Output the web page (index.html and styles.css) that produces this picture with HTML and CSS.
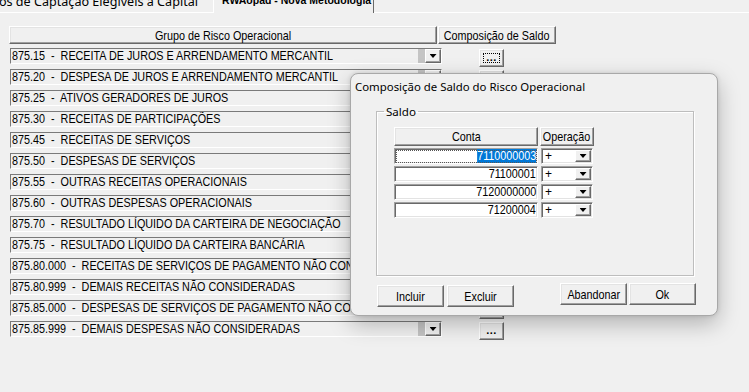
FILE: index.html
```html
<!DOCTYPE html>
<html lang="pt-BR">
<head>
  <meta charset="UTF-8">
  <meta name="viewport" content="width=device-width, initial-scale=1.0">
  <title>Grupo de Risco Operacional</title>
  <link rel="stylesheet" href="styles.css">
</head>
<body>

  <div class="tabs">
    <div class="tab tab-first"><span>Instrumentos de Captação Elegíveis à Capital</span></div>
    <div class="tab tab-active"><span>RWAopad - Nova Metodologia</span></div>
    <div class="tab-rest"></div>
  </div>

  <div class="page">
    <div class="grid-head">
      <div class="btn head-grupo"><span class="n">Grupo de Risco Operacional</span></div>
      <div class="btn head-saldo"><span class="n">Composição de Saldo</span></div>
    </div>

    <div class="rows">
      <div class="row">
        <div class="combo"><span class="combo-text"><span class="n">875.15  -  RECEITA DE JUROS E ARRENDAMENTO MERCANTIL</span></span><span class="combo-strip"></span><span class="combo-btn"><i class="arrow"></i></span></div>
        <div class="btn dots focused"><span>...</span></div>
      </div>
      <div class="row">
        <div class="combo"><span class="combo-text"><span class="n">875.20  -  DESPESA DE JUROS E ARRENDAMENTO MERCANTIL</span></span><span class="combo-strip"></span><span class="combo-btn"><i class="arrow"></i></span></div>
        <div class="btn dots"><span>...</span></div>
      </div>
      <div class="row">
        <div class="combo"><span class="combo-text"><span class="n">875.25  -  ATIVOS GERADORES DE JUROS</span></span><span class="combo-strip"></span><span class="combo-btn"><i class="arrow"></i></span></div>
        <div class="btn dots"><span>...</span></div>
      </div>
      <div class="row">
        <div class="combo"><span class="combo-text"><span class="n">875.30  -  RECEITAS DE PARTICIPAÇÕES</span></span><span class="combo-strip"></span><span class="combo-btn"><i class="arrow"></i></span></div>
        <div class="btn dots"><span>...</span></div>
      </div>
      <div class="row">
        <div class="combo"><span class="combo-text"><span class="n">875.45  -  RECEITAS DE SERVIÇOS</span></span><span class="combo-strip"></span><span class="combo-btn"><i class="arrow"></i></span></div>
        <div class="btn dots"><span>...</span></div>
      </div>
      <div class="row">
        <div class="combo"><span class="combo-text"><span class="n">875.50  -  DESPESAS DE SERVIÇOS</span></span><span class="combo-strip"></span><span class="combo-btn"><i class="arrow"></i></span></div>
        <div class="btn dots"><span>...</span></div>
      </div>
      <div class="row">
        <div class="combo"><span class="combo-text"><span class="n">875.55  -  OUTRAS RECEITAS OPERACIONAIS</span></span><span class="combo-strip"></span><span class="combo-btn"><i class="arrow"></i></span></div>
        <div class="btn dots"><span>...</span></div>
      </div>
      <div class="row">
        <div class="combo"><span class="combo-text"><span class="n">875.60  -  OUTRAS DESPESAS OPERACIONAIS</span></span><span class="combo-strip"></span><span class="combo-btn"><i class="arrow"></i></span></div>
        <div class="btn dots"><span>...</span></div>
      </div>
      <div class="row">
        <div class="combo"><span class="combo-text"><span class="n">875.70  -  RESULTADO LÍQUIDO DA CARTEIRA DE NEGOCIAÇÃO</span></span><span class="combo-strip"></span><span class="combo-btn"><i class="arrow"></i></span></div>
        <div class="btn dots"><span>...</span></div>
      </div>
      <div class="row">
        <div class="combo"><span class="combo-text"><span class="n">875.75  -  RESULTADO LÍQUIDO DA CARTEIRA BANCÁRIA</span></span><span class="combo-strip"></span><span class="combo-btn"><i class="arrow"></i></span></div>
        <div class="btn dots"><span>...</span></div>
      </div>
      <div class="row">
        <div class="combo"><span class="combo-text"><span class="n">875.80.000  -  RECEITAS DE SERVIÇOS DE PAGAMENTO NÃO CONSIDERADAS</span></span><span class="combo-strip"></span><span class="combo-btn"><i class="arrow"></i></span></div>
        <div class="btn dots"><span>...</span></div>
      </div>
      <div class="row">
        <div class="combo"><span class="combo-text"><span class="n">875.80.999  -  DEMAIS RECEITAS NÃO CONSIDERADAS</span></span><span class="combo-strip"></span><span class="combo-btn"><i class="arrow"></i></span></div>
        <div class="btn dots"><span>...</span></div>
      </div>
      <div class="row">
        <div class="combo"><span class="combo-text"><span class="n">875.85.000  -  DESPESAS DE SERVIÇOS DE PAGAMENTO NÃO CONSIDERADAS</span></span><span class="combo-strip"></span><span class="combo-btn"><i class="arrow"></i></span></div>
        <div class="btn dots"><span>...</span></div>
      </div>
      <div class="row">
        <div class="combo"><span class="combo-text"><span class="n">875.85.999  -  DEMAIS DESPESAS NÃO CONSIDERADAS</span></span><span class="combo-strip"></span><span class="combo-btn"><i class="arrow"></i></span></div>
        <div class="btn dots"><span>...</span></div>
      </div>
    </div>
  </div>

  <div class="dialog">
    <div class="dlg-title">Composição de Saldo do Risco Operacional</div>

    <fieldset class="group">
      <legend>Saldo</legend>
      <div class="saldo-head">
        <div class="btn col-conta"><span class="n">Conta</span></div>
        <div class="btn col-op"><span class="n">Operação</span></div>
      </div>
      <div class="saldo-rows">
        <div class="saldo-row">
          <div class="edit focused"><span class="n"><span class="sel">7110000003</span></span></div>
          <div class="op-combo"><span class="op-text">+</span><span class="combo-btn"><i class="arrow"></i></span></div>
        </div>
        <div class="saldo-row">
          <div class="edit"><span class="n">71100001</span></div>
          <div class="op-combo"><span class="op-text">+</span><span class="combo-btn"><i class="arrow"></i></span></div>
        </div>
        <div class="saldo-row">
          <div class="edit"><span class="n">7120000000</span></div>
          <div class="op-combo"><span class="op-text">+</span><span class="combo-btn"><i class="arrow"></i></span></div>
        </div>
        <div class="saldo-row">
          <div class="edit"><span class="n">71200004</span></div>
          <div class="op-combo"><span class="op-text">+</span><span class="combo-btn"><i class="arrow"></i></span></div>
        </div>
      </div>
    </fieldset>

    <div class="dlg-buttons">
      <div class="btn-pair pair-left">
        <button class="btn dlg-btn"><span class="n">Incluir</span></button>
        <button class="btn dlg-btn"><span class="n">Excluir</span></button>
      </div>
      <div class="btn-pair pair-right">
        <button class="btn dlg-btn"><span class="n">Abandonar</span></button>
        <button class="btn dlg-btn"><span class="n">Ok</span></button>
      </div>
    </div>
  </div>

</body>
</html>
```

FILE: styles.css
```css
* {
  box-sizing: border-box;
}

body {
  margin: 0;
  width: 749px;
  height: 392px;
  overflow: hidden;
  position: relative;
  background: #f0f0f0;
  color: #000;
  font-family: "Liberation Sans", Arial, sans-serif;
  font-size: 13px;
}

/* texto estreito (tipo Arial Narrow) */
.n {
  display: inline-block;
  white-space: pre;
  transform: scaleX(0.83);
}

/* abas do topo */
.tabs {
  display: flex;
  height: 13px;
}

.tab {
  height: 13px;
  overflow: hidden;
  display: flex;
  align-items: flex-start;
  white-space: nowrap;
}

.tab-first {
  width: 214px;
  padding-right: 15px;
  justify-content: flex-end;
  border-right: 1px solid #fff;
  border-bottom: 1px solid #fff;
  font-family: "Noto Sans", sans-serif;
  font-size: 12.6px;
  line-height: 14px;
}

.tab-first span {
  margin-top: -5px;
}

.tab-active {
  width: 160px;
  padding-left: 8px;
  border-right: 1px solid #696969;
  font-family: "Liberation Sans", sans-serif;
  font-weight: bold;
  font-size: 10.5px;
  line-height: 12px;
}

.tab-active span {
  margin-top: -6px;
}

.tab-rest {
  flex: 1;
  border-bottom: 1px solid #fff;
}

/* botões 3D */
.btn {
  background: #f0f0f0;
  border: 1px solid;
  border-color: #fff #696969 #696969 #fff;
  box-shadow: inset -1px -1px 0 #a0a0a0, inset 1px 1px 0 #e3e3e3;
  font: inherit;
  color: #000;
  padding: 0;
  display: flex;
  align-items: center;
  justify-content: center;
  white-space: nowrap;
}

.page {
  padding: 13px 0 0 9px;
}

.grid-head {
  display: flex;
  height: 18px;
  gap: 1px;
}

.head-grupo {
  width: 428px;
}

.head-saldo {
  width: 118px;
}

.rows {
  margin-top: 4px;
  display: flex;
  flex-direction: column;
  gap: 5px;
}

.row {
  display: flex;
  align-items: flex-start;
  height: 16px;
}

.combo {
  margin-left: 1px;
  width: 432px;
  height: 16px;
  display: flex;
  border: 1px solid;
  border-color: #7a7a7a #fff #fff #7a7a7a;
  background: #f0f0f0;
}

.combo-text {
  flex: 1;
  overflow: hidden;
  padding-left: 1px;
  line-height: 14px;
}

.combo-text .n {
  transform-origin: 0 50%;
}

.combo-strip {
  width: 7px;
  background: #c4c4c4;
}

.combo-btn {
  width: 16px;
  display: flex;
  align-items: center;
  justify-content: center;
  background: #f0f0f0;
  border: 1px solid;
  border-color: #fff #696969 #696969 #fff;
  box-shadow: inset -1px -1px 0 #a0a0a0;
}

.arrow {
  display: block;
  width: 7px;
  height: 4px;
  background: #000;
  clip-path: polygon(0 0, 100% 0, 50% 100%);
}

.dots {
  flex: none;
  margin-left: 37px;
  margin-top: 1px;
  width: 25px;
  height: 18px;
  align-items: flex-end;
  position: relative;
  font-family: "Liberation Sans", sans-serif;
  font-weight: bold;
  font-size: 11px;
  line-height: 11px;
  letter-spacing: 0.5px;
}

.dots span {
  margin-bottom: 3px;
}

.dots.focused::after {
  content: "";
  position: absolute;
  left: 3px;
  top: 3px;
  right: 3px;
  bottom: 3px;
  border: 1px dotted #000;
}

/* janela de composição */
.dialog {
  position: absolute;
  left: 350px;
  top: 73px;
  width: 368px;
  height: 243px;
  background: #f0f0f0;
  border: 1px solid #a8a8a8;
  border-radius: 8px;
  box-shadow: 0 8px 22px rgba(0, 0, 0, 0.26), 0 0 4px rgba(0, 0, 0, 0.12);
}

.dlg-title {
  height: 30px;
  padding: 5px 0 0 4px;
  font-family: "Noto Sans", sans-serif;
  font-size: 11.4px;
  line-height: 15px;
}

.group {
  margin: 0 0 0 25px;
  width: 318px;
  height: 172px;
  padding: 8px 0 0 17px;
  border: 1px solid #bdbdbd;
  box-shadow: inset 1px 1px 0 #fff, 1px 1px 0 #fff;
}

.group legend {
  margin-left: -10px;
  padding: 0 2px;
  font-family: "Noto Sans", sans-serif;
  font-size: 11.6px;
  line-height: 15px;
}

.saldo-head {
  display: flex;
  gap: 2px;
  height: 19px;
}

.col-conta {
  width: 144px;
}

.col-op {
  width: 54px;
}

.saldo-rows {
  margin-top: 2px;
  display: flex;
  flex-direction: column;
  gap: 2px;
}

.saldo-row {
  display: flex;
  gap: 3px;
  height: 16px;
}

.edit {
  width: 144px;
  position: relative;
  background: #fff;
  border: 1px solid;
  border-color: #a0a0a0 #fff #fff #a0a0a0;
  box-shadow: inset 1px 1px 0 #696969, inset -1px -1px 0 #e3e3e3;
  display: flex;
  justify-content: flex-end;
  overflow: hidden;
  line-height: 14px;
  padding-right: 1px;
}

.edit .n {
  transform-origin: 100% 50%;
}

.edit.focused::after {
  content: "";
  position: absolute;
  left: 1px;
  top: 1px;
  right: 0;
  bottom: 0;
  border: 1px dotted #555;
}

.sel {
  background: #0078d7;
  color: #fff;
}

.op-combo {
  width: 52px;
  display: flex;
  background: #fff;
  border: 1px solid;
  border-color: #a0a0a0 #fff #fff #a0a0a0;
  box-shadow: inset 1px 1px 0 #696969, inset -1px -1px 0 #e3e3e3;
  padding: 1px;
}

.op-text {
  flex: 1;
  padding-left: 2px;
  line-height: 12px;
  font-family: "Liberation Sans", sans-serif;
  font-size: 12px;
}

.dlg-buttons {
  display: flex;
  justify-content: space-between;
  align-items: flex-start;
  margin-top: 7px;
  padding: 0 21px 0 26px;
}

.btn-pair {
  display: flex;
}

.pair-left {
  gap: 3px;
  margin-top: 2px;
}

.pair-right {
  gap: 2px;
}

.dlg-btn {
  width: 67px;
  height: 22px;
}
```
